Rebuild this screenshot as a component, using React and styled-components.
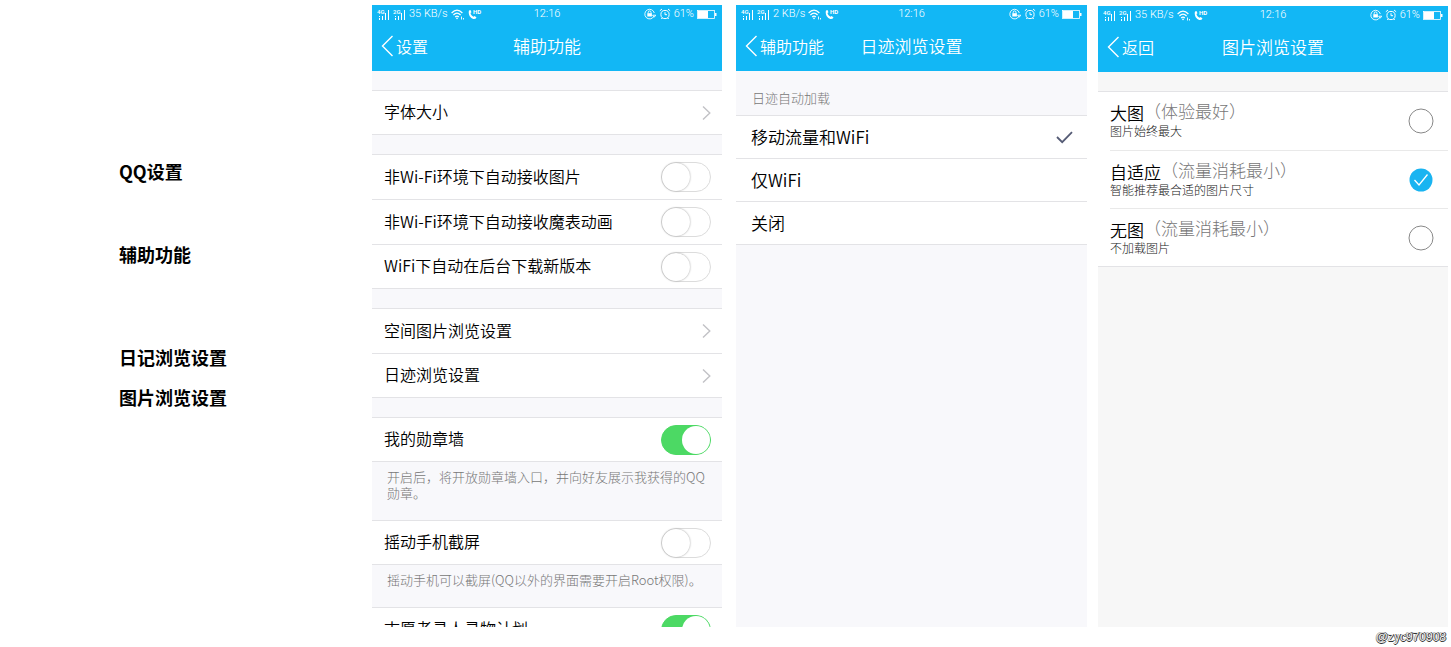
import { useState } from "react";
import styled, { createGlobalStyle } from "styled-components";

const GlobalStyle = createGlobalStyle`
  body {
    margin: 0;
    background: #fff;
    color: #000;
    font-family: "Noto Sans CJK SC", sans-serif;
  }
`;

const Page = styled.div`
  display: flex;
  flex-direction: column;
  height: 100vh;
`;

const Board = styled.main`
  display: grid;
  flex: 1;
  grid-template-columns: 372fr 350fr 365fr 361fr;
  min-height: 0;
  padding-right: 3px;
`;

const Footer = styled.footer`
  height: 20px;
  padding-right: 5px;
  font-family: "Liberation Sans", sans-serif;
  font-size: 12px;
  line-height: 20px;
  text-align: right;
  color: #eee;
  text-shadow: 1px 0 #333, 0 1px #333, -1px 0 #999;
`;

/* outline on the left */

const Outline = styled.ul`
  min-width: 0;
  margin: 0;
  padding: 159px 0 0 119px;
  list-style: none;
`;

const OutlineItem = styled.li`
  margin-bottom: ${({ $space }) => $space || 0}px;
  font-size: 18px;
  font-weight: 700;
  line-height: 24px;
`;

/* phone */

const Phone = styled.section`
  min-width: 0;
  min-height: 0;
  margin-top: ${({ $top }) => $top || 5}px;
  margin-left: ${({ $left }) => $left || 0}px;
  overflow: hidden;
  background: ${({ $bg }) => $bg || "#f8f8fb"};
`;

const Header = styled.header`
  background: #12b7f5;
  color: #fff;
`;

const StatusBar = styled.div`
  display: grid;
  grid-template-columns: 1fr auto 1fr;
  align-items: center;
  height: 18px;
  padding: 0 5px;
  font-family: Roboto, sans-serif;
  font-size: 11px;
  font-weight: 300;
  line-height: 18px;
`;

const StatusSide = styled.div`
  display: flex;
  align-items: center;
  justify-content: ${({ $end }) => ($end ? "flex-end" : "flex-start")};
  gap: 3px;
`;

const Nav = styled.nav`
  display: grid;
  grid-template-columns: 1fr auto 1fr;
  align-items: center;
  box-sizing: border-box;
  height: 48px;
  padding: 0 9px 2px;
`;

const Back = styled.button`
  display: flex;
  align-items: center;
  justify-self: start;
  gap: 2px;
  padding: 0;
  border: 0;
  background: none;
  color: #fff;
  font-family: inherit;
  font-size: 16px;
  font-weight: 350;
  line-height: 24px;
  white-space: nowrap;
  cursor: pointer;
`;

const Title = styled.h2`
  margin: 0;
  font-size: 17px;
  font-weight: 350;
  line-height: 24px;
`;

/* list */

const Group = styled.div`
  margin-top: ${({ $space = 19 }) => $space}px;
  border-top: 1px solid #e3e3e6;
  background: #fff;
`;

const Row = styled.label`
  display: flex;
  align-items: center;
  justify-content: space-between;
  box-sizing: border-box;
  height: 45px;
  padding: 0 11px 0 12px;
  border-bottom: 1px solid #e3e3e6;
  font-size: 16px;
  font-weight: 350;
  line-height: 24px;
  cursor: pointer;
  &:last-child {
    height: 44px;
  }
`;

const RowText = styled.span`
  padding-bottom: 3px;
`;

const LinkRow = styled(Row)`
  color: inherit;
  text-decoration: none;
`;

const Note = styled.p`
  margin: 0;
  padding: 7px 12px 19px 15px;
  color: #777;
  font-size: 13px;
  font-weight: 300;
  line-height: 16px;
`;

const Switch = styled.input`
  appearance: none;
  flex: none;
  box-sizing: border-box;
  width: 50px;
  height: 30px;
  margin: 0;
  border: 1px solid #dcdcdc;
  border-radius: 15px;
  background: #fff;
  cursor: pointer;
  &::before {
    content: "";
    display: block;
    box-sizing: border-box;
    width: 28px;
    height: 28px;
    border-radius: 50%;
    background: #fff;
    box-shadow: 0 0 2px #999;
  }
  &:checked {
    border-color: #4cd964;
    background: #4cd964;
  }
  &:checked::before {
    margin-left: 20px;
    box-shadow: none;
  }
`;

const SectionLabel = styled.h3`
  margin: 0;
  padding: 15px 16px 5px;
  color: #777;
  font-size: 13px;
  font-weight: 300;
  line-height: 24px;
`;

const ChoiceRow = styled(Row)`
  height: 43px;
  padding: 0 14px 0 15px;
  font-size: 17px;
  &:last-child {
    height: 43px;
  }
`;

const ChoiceText = styled.span`
  flex: 1;
`;

const Radio = styled.input`
  appearance: none;
  width: 0;
  height: 0;
  margin: 0;
`;

const SizeGroup = styled(Group)`
  border-bottom: 1px solid #e3e3e6;
`;

const SizeRow = styled.label`
  display: flex;
  align-items: center;
  justify-content: space-between;
  box-sizing: border-box;
  height: 58px;
  margin-left: 12px;
  padding-right: 14px;
  border-top: 1px solid #e9e9e9;
  cursor: pointer;
  &:first-child {
    border-top: 0;
  }
`;

const SizeText = styled.div`
  display: flex;
  flex: 1;
  flex-direction: column;
  padding-bottom: 3px;
`;

const SizeName = styled.div`
  display: flex;
  align-items: flex-start;
  font-size: 17px;
  line-height: 20px;
`;

const Main = styled.span`
  padding-top: 2px;
  font-weight: 350;
`;

const Hint = styled.span`
  color: #777;
  font-weight: 300;
`;

const SizeDesc = styled.span`
  color: #222;
  font-size: 12px;
  font-weight: 300;
  line-height: 15px;
`;

/* icons */

const Signal = ({ type }) => (
  <svg width="13" height="11" viewBox="0 0 13 11" fill="#fff" aria-hidden="true">
    <text x="0" y="5" fontSize="6" fontWeight="500">
      {type}
    </text>
    <rect x="2" y="7" width="1" height="1" />
    <rect x="2" y="9" width="1" height="2" />
    <rect x="5" y="7" width="1" height="4" />
    <rect x="8" y="4" width="1" height="7" />
    <rect x="11" y="1" width="1" height="10" />
  </svg>
);

const Wifi = () => (
  <svg width="14" height="11" viewBox="0 0 14 11" fill="none" stroke="#fff" strokeWidth="1.2" aria-hidden="true">
    <path d="M.6 4Q6-1.600 11.400 4M2.400 6Q6 2.400 9.600 6M4.200 8Q6 6.200 7.800 8" />
    <circle cx="6" cy="9.400" r=".8" fill="#fff" stroke="none" />
    <path d="M10.500 7.500v3M12.500 10.500V9" strokeWidth=".9" />
  </svg>
);

const CallHd = () => (
  <svg width="14" height="11" viewBox="0 0 14 11" fill="#fff" aria-hidden="true">
    <path d="M1 1.500l1.500-.6 1 2.300-1 .9c.4 1.800 1.400 3 3 3.600l1.200-.8 1.800 1.500-1 1.400C3.800 10.900-.4 6.300 1 1.500z" />
    <text x="5" y="5" fontSize="6" fontWeight="700">
      HD
    </text>
  </svg>
);

const RotationLock = () => (
  <svg width="12" height="12" viewBox="0 0 12 12" fill="none" stroke="#fff" aria-hidden="true">
    <path d="M9.800 8.500A4.800 4.800 0 1 1 10.300 5M8.600 7.200h3.200l-1.600 2z" strokeWidth=".9" />
    <path d="M4.200 5.400V4.300a1.400 1.400 0 0 1 2.800 0v1.100" strokeWidth=".9" />
    <rect x="3.300" y="5.200" width="4.600" height="3.300" fill="#fff" stroke="none" />
  </svg>
);

const Alarm = () => (
  <svg width="12" height="12" viewBox="0 0 12 12" fill="none" stroke="#fff" aria-hidden="true">
    <circle cx="6" cy="6.500" r="4.100" />
    <path d="M6 4.200v2.500h2M.8 2.800L3 1M11.200 2.800L9 1M3.200 9.800l-.8 1.200M8.800 9.800l.8 1.200" />
  </svg>
);

const Battery = () => (
  <svg width="20" height="9" viewBox="0 0 20 9" aria-hidden="true">
    <rect x=".5" y=".5" width="17" height="8" fill="none" stroke="#fff" strokeWidth=".8" />
    <rect x="1" y="1" width="10" height="7" fill="#fff" />
    <rect x="18" y="3" width="1.500" height="3" fill="#fff" />
  </svg>
);

const BackArrow = () => (
  <svg width="13" height="22" viewBox="0 0 13 22" fill="none" stroke="#fff" strokeWidth="1.400" aria-hidden="true">
    <path d="M11.500 1L1.500 11l10 10" />
  </svg>
);

const Arrow = () => (
  <svg width="9" height="14" viewBox="0 0 9 14" fill="none" stroke="#c2c2c6" strokeWidth="1.400" aria-hidden="true">
    <path d="M1 .5L7.800 7 1 13.500" />
  </svg>
);

const Tick = () => (
  <svg width="17" height="13" viewBox="0 0 17 13" fill="none" stroke="#555b75" strokeWidth="1.800" aria-hidden="true">
    <path d="M1 6l5.200 5.200L16 1.200" />
  </svg>
);

const Circle = ({ on }) => (
  <svg width="26" height="26" viewBox="0 0 26 26" fill="none" aria-hidden="true">
    {on ? (
      <>
        <circle cx="13" cy="13" r="11.500" fill="#19b4f1" />
        <path d="M6.500 13l4.500 5 8.500-10.500" stroke="#fff" strokeWidth="1.300" />
      </>
    ) : (
      <circle cx="13" cy="13" r="12" stroke="#888" />
    )}
  </svg>
);

const Top = ({ speed, back, title }) => (
  <Header>
    <StatusBar>
      <StatusSide>
        <Signal type="4G" />
        <Signal type="2G" />
        <span>{speed} KB/s</span>
        <Wifi />
        <CallHd />
      </StatusSide>
      <span>12:16</span>
      <StatusSide $end>
        <RotationLock />
        <Alarm />
        <span>61%</span>
        <Battery />
      </StatusSide>
    </StatusBar>
    <Nav>
      <Back type="button">
        <BackArrow />
        {back}
      </Back>
      <Title>{title}</Title>
    </Nav>
  </Header>
);

const SwitchRow = ({ label, on }) => (
  <Row>
    <RowText>{label}</RowText>
    <Switch type="checkbox" defaultChecked={on} />
  </Row>
);

const ArrowRow = ({ label }) => (
  <LinkRow as="a" href="#">
    <RowText>{label}</RowText>
    <Arrow />
  </LinkRow>
);

const LOADS = ["移动流量和WiFi", "仅WiFi", "关闭"];

const SIZES = [
  { name: "大图", hint: "（体验最好）", desc: "图片始终最大" },
  { name: "自适应", hint: "（流量消耗最小）", desc: "智能推荐最合适的图片尺寸" },
  { name: "无图", hint: "（流量消耗最小）", desc: "不加载图片" },
];

export default function App() {
  const [load, setLoad] = useState(0);
  const [size, setSize] = useState(1);

  return (
    <Page lang="zh-CN">
      <GlobalStyle />
      <Board>
        <Outline>
          <OutlineItem $space={59}>QQ设置</OutlineItem>
          <OutlineItem $space={79}>辅助功能</OutlineItem>
          <OutlineItem $space={16}>日记浏览设置</OutlineItem>
          <OutlineItem>图片浏览设置</OutlineItem>
        </Outline>

        <Phone>
          <Top speed="35" back="设置" title="辅助功能" />
          <Group>
            <ArrowRow label="字体大小" />
          </Group>
          <Group>
            <SwitchRow label="非Wi-Fi环境下自动接收图片" />
            <SwitchRow label="非Wi-Fi环境下自动接收魔表动画" />
            <SwitchRow label="WiFi下自动在后台下载新版本" />
          </Group>
          <Group>
            <ArrowRow label="空间图片浏览设置" />
            <ArrowRow label="日迹浏览设置" />
          </Group>
          <Group>
            <SwitchRow label="我的勋章墙" on />
          </Group>
          <Note>开启后，将开放勋章墙入口，并向好友展示我获得的QQ勋章。</Note>
          <Group $space={0}>
            <SwitchRow label="摇动手机截屏" />
          </Group>
          <Note>摇动手机可以截屏(QQ以外的界面需要开启Root权限)。</Note>
          <Group $space={0}>
            <SwitchRow label="志愿者寻人寻物计划" on />
          </Group>
        </Phone>

        <Phone $left={14}>
          <Top speed="2" back="辅助功能" title="日迹浏览设置" />
          <SectionLabel>日迹自动加载</SectionLabel>
          <Group $space={0}>
            {LOADS.map((name, i) => (
              <ChoiceRow key={name}>
                <ChoiceText>{name}</ChoiceText>
                <Radio type="radio" name="load" checked={load === i} onChange={() => setLoad(i)} />
                {load === i && <Tick />}
              </ChoiceRow>
            ))}
          </Group>
        </Phone>

        <Phone $top={6} $left={11} $bg="#f7f7f7">
          <Top speed="35" back="返回" title="图片浏览设置" />
          <SizeGroup>
            {SIZES.map((item, i) => (
              <SizeRow key={item.name}>
                <SizeText>
                  <SizeName>
                    <Main>{item.name}</Main>
                    <Hint>{item.hint}</Hint>
                  </SizeName>
                  <SizeDesc>{item.desc}</SizeDesc>
                </SizeText>
                <Radio type="radio" name="size" checked={size === i} onChange={() => setSize(i)} />
                <Circle on={size === i} />
              </SizeRow>
            ))}
          </SizeGroup>
        </Phone>
      </Board>
      <Footer>@zyc970908</Footer>
    </Page>
  );
}
